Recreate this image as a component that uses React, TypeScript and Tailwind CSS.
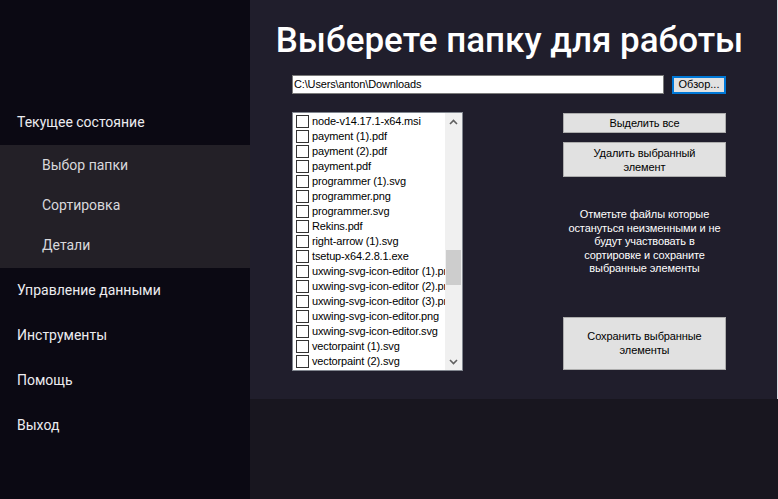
const files = [
  "node-v14.17.1-x64.msi",
  "payment (1).pdf",
  "payment (2).pdf",
  "payment.pdf",
  "programmer (1).svg",
  "programmer.png",
  "programmer.svg",
  "Rekins.pdf",
  "right-arrow (1).svg",
  "tsetup-x64.2.8.1.exe",
  "uxwing-svg-icon-editor (1).png",
  "uxwing-svg-icon-editor (2).png",
  "uxwing-svg-icon-editor (3).png",
  "uxwing-svg-icon-editor.png",
  "uxwing-svg-icon-editor.svg",
  "vectorpaint (1).svg",
  "vectorpaint (2).svg",
];

const winFont = { fontFamily: '"Liberation Sans", Arial, sans-serif' };

function NavItem({ label, sub }: { label: string; sub?: boolean }) {
  return (
    <div
      className={
        sub
          ? "h-[40px] flex items-center pl-[42px] text-[14px] text-[#d8d8dc]"
          : "h-[45px] flex items-center pl-[17px] text-[14px] text-[#ececf0]"
      }
    >
      {label}
    </div>
  );
}

function Chevron({ up }: { up?: boolean }) {
  return (
    <svg width="9" height="6" viewBox="0 0 9 6" className="block">
      <path
        d={up ? "M1 5 L4.5 1.5 L8 5" : "M1 1 L4.5 4.5 L8 1"}
        fill="none"
        stroke="#606060"
        strokeWidth="1.6"
      />
    </svg>
  );
}

function FileList() {
  return (
    <div
      className="w-[171px] h-[259px] border border-[#828790] bg-white flex shrink-0"
      style={winFont}
    >
      <div className="flex-1 overflow-hidden pt-[1px]">
        {files.map((f) => (
          <div key={f} className="h-[15px] flex items-center pl-[3px] whitespace-nowrap">
            <span className="w-[13px] h-[13px] border border-[#333333] bg-white shrink-0" />
            <span className="ml-[3px] text-[11px] tracking-[-0.15px] leading-[15px] text-black">
              {f}
            </span>
          </div>
        ))}
      </div>
      <div className="w-[17px] bg-[#f0f0f0] flex flex-col items-center shrink-0">
        <div className="h-[17px] flex items-center justify-center">
          <Chevron up />
        </div>
        <div className="flex-1 w-full px-[1px] pt-[120px]">
          <div className="h-[35px] w-full bg-[#cdcdcd]" />
        </div>
        <div className="h-[17px] flex items-center justify-center">
          <Chevron />
        </div>
      </div>
    </div>
  );
}

function WinButton({ children, h }: { children: React.ReactNode; h: string }) {
  return (
    <div
      className={`${h} w-full bg-[#e1e1e1] border border-[#adadad] flex items-center justify-center text-center text-[11px] tracking-[-0.1px] leading-[14px] text-black px-4`}
      style={winFont}
    >
      {children}
    </div>
  );
}

export default function App() {
  return (
    <div
      className="w-[778px] h-[499px] flex overflow-hidden"
      style={{ fontFamily: 'Roboto, "Noto Sans", sans-serif' }}
    >
      <aside className="w-[250px] bg-[#0b0913] pt-[100px] shrink-0">
        <NavItem label="Текущее состояние" />
        <div className="bg-[#232027] pb-[3px]">
          <NavItem label="Выбор папки" sub />
          <NavItem label="Сортировка" sub />
          <NavItem label="Детали" sub />
        </div>
        <NavItem label="Управление данными" />
        <NavItem label="Инструменты" />
        <NavItem label="Помощь" />
        <NavItem label="Выход" />
      </aside>

      <main className="flex-1 flex flex-col">
        <section className="h-[399px] bg-[#201e2c] border-r border-[#d8dbe3] flex flex-col">
          <h1 className="pt-[19px] text-center text-[35px] leading-[44px] font-medium text-white pr-[8px]">
            Выберете папку для работы
          </h1>

          <div className="mt-[12px] pl-[42px] flex items-center" style={winFont}>
            <div className="w-[372px] h-[19px] bg-white border border-[#7a7a7a] flex items-center pl-[1px] text-[11px] tracking-[-0.15px] text-black">
              C:\Users\anton\Downloads
            </div>
            <div className="ml-[8px] w-[54px] h-[18px] bg-[#e1e1e1] border-2 border-[#0078d7] flex items-center justify-center text-[11px] text-black">
              Обзор...
            </div>
          </div>

          <div className="mt-[18px] pl-[42px] flex items-start">
            <FileList />
            <div className="ml-[100px] w-[163px] pt-[1px] flex flex-col">
              <WinButton h="h-[20px]">Выделить все</WinButton>
              <div className="mt-[9px]">
                <WinButton h="h-[35px]">Удалить выбранный элемент</WinButton>
              </div>
              <p
                className="mt-[31px] text-center text-[11px] tracking-[-0.1px] leading-[13.5px] text-white"
                style={winFont}
              >
                Отметьте файлы которые
                <br />
                остануться неизменными и не
                <br />
                будут участвовать в
                <br />
                сортировке и сохраните
                <br />
                выбранные элементы
              </p>
              <div className="mt-[41px]">
                <WinButton h="h-[53px]">Сохранить выбранные элементы</WinButton>
              </div>
            </div>
          </div>
        </section>
        <div className="flex-1 bg-[#18161f]" />
      </main>
    </div>
  );
}
